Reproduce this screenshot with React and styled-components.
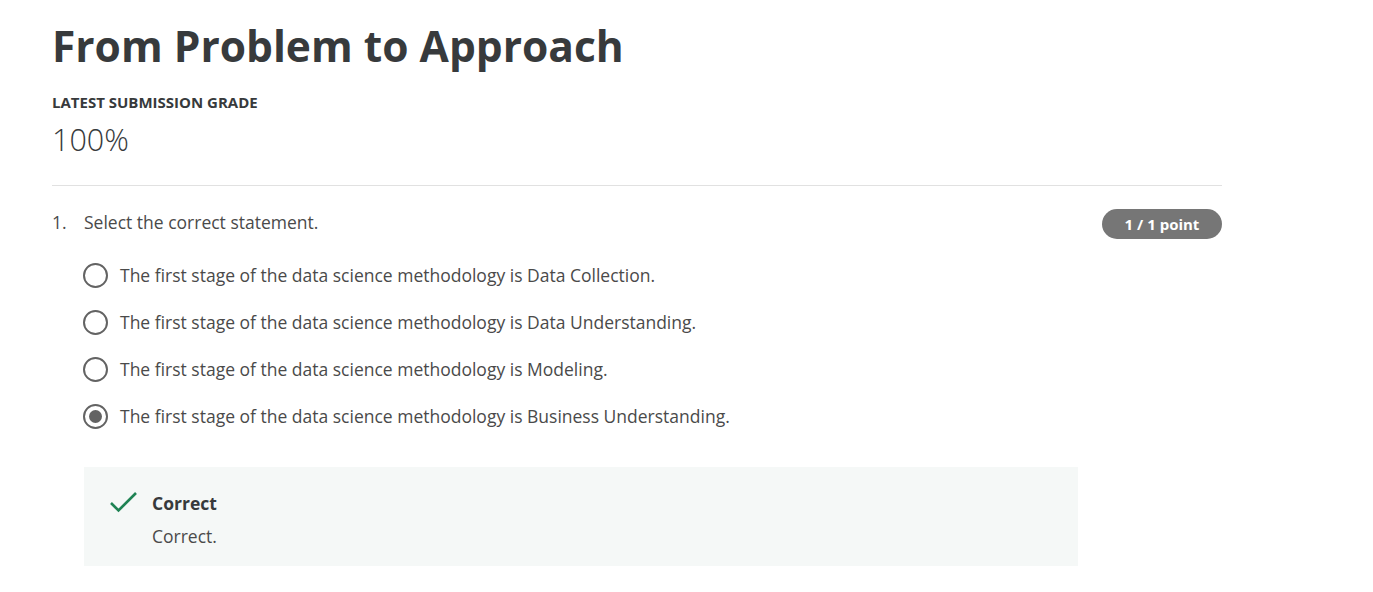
import styled, { createGlobalStyle } from 'styled-components';

const GlobalStyle = createGlobalStyle`
  body {
    margin: 0;
    background: #fff;
    font-family: "Open Sans", "Liberation Sans", sans-serif;
    color: #1f1f1f;
  }
`;

const Page = styled.main`
  width: 1170px;
  padding: 18px 0 0 52px;
`;

const Title = styled.h1`
  margin: 0;
  font-size: 42.5px;
  line-height: 56px;
  font-weight: 700;
  color: #373a3c;
`;

const GradeLabel = styled.div`
  margin-top: 18px;
  font-size: 15px;
  line-height: 20px;
  font-weight: 700;
  color: #373a3c;
`;

const GradeValue = styled.div`
  margin-top: 7px;
  font-size: 30.5px;
  line-height: 40px;
  font-weight: 300;
  color: #373a3c;
`;

const Divider = styled.hr`
  margin: 26px 0 0;
  border: 0;
  border-top: 1px solid #e1e1e1;
`;

const Question = styled.section`
  padding-top: 23px;
`;

const QuestionHead = styled.div`
  display: flex;
  align-items: flex-start;
  justify-content: space-between;
`;

const Prompt = styled.div`
  display: flex;
  font-size: 17.5px;
  line-height: 26px;
  color: #4a4a4a;
`;

const Number = styled.span`
  width: 32px;
`;

const Badge = styled.span`
  width: 120px;
  height: 30px;
  border-radius: 15px;
  background: #767676;
  color: #fff;
  font-size: 15px;
  font-weight: 700;
  display: flex;
  align-items: center;
  justify-content: center;
`;

const Options = styled.div`
  margin: 23px 0 0 31px;
  display: flex;
  flex-direction: column;
  gap: 21px;
`;

const Option = styled.label`
  display: flex;
  align-items: center;
  gap: 12px;
  font-size: 17.5px;
  line-height: 26px;
  color: #4a4a4a;
`;

const Radio = styled.span`
  box-sizing: border-box;
  width: 25px;
  height: 25px;
  border-radius: 50%;
  border: 2px solid #636363;
  display: flex;
  align-items: center;
  justify-content: center;

  &::after {
    content: '';
    width: 13px;
    height: 13px;
    border-radius: 50%;
    background: ${p => (p.$checked ? '#636363' : 'transparent')};
  }
`;

const Feedback = styled.div`
  margin: 38px 0 0 32px;
  width: 994px;
  box-sizing: border-box;
  padding: 23px 24px 17px 26px;
  background: #f5f8f7;
  display: flex;
  gap: 14px;
`;

const FeedbackText = styled.div`
  display: flex;
  flex-direction: column;
  gap: 7px;
`;

const FeedbackTitle = styled.div`
  font-size: 17.5px;
  line-height: 26px;
  font-weight: 700;
  color: #373a3c;
`;

const FeedbackBody = styled.div`
  font-size: 17.5px;
  line-height: 26px;
  color: #4a4a4a;
`;

const Check = () => (
  <svg width="28" height="26" viewBox="0 0 28 26" fill="none">
    <path d="M1 13 L8.5 20.5 L26 3" stroke="#1f8354" strokeWidth="2.6" />
  </svg>
);

const options = [
  'The first stage of the data science methodology is Data Collection.',
  'The first stage of the data science methodology is Data Understanding.',
  'The first stage of the data science methodology is Modeling.',
  'The first stage of the data science methodology is Business Understanding.',
];

export default function App() {
  return (
    <>
      <GlobalStyle />
      <Page>
        <Title>From Problem to Approach</Title>
        <GradeLabel>LATEST SUBMISSION GRADE</GradeLabel>
        <GradeValue>100%</GradeValue>
        <Divider />
        <Question>
          <QuestionHead>
            <Prompt>
              <Number>1.</Number>
              <span>Select the correct statement.</span>
            </Prompt>
            <Badge>1 / 1 point</Badge>
          </QuestionHead>
          <Options>
            {options.map((text, i) => (
              <Option key={i}>
                <Radio $checked={i === 3} />
                {text}
              </Option>
            ))}
          </Options>
          <Feedback>
            <Check />
            <FeedbackText>
              <FeedbackTitle>Correct</FeedbackTitle>
              <FeedbackBody>Correct.</FeedbackBody>
            </FeedbackText>
          </Feedback>
        </Question>
      </Page>
    </>
  );
}
